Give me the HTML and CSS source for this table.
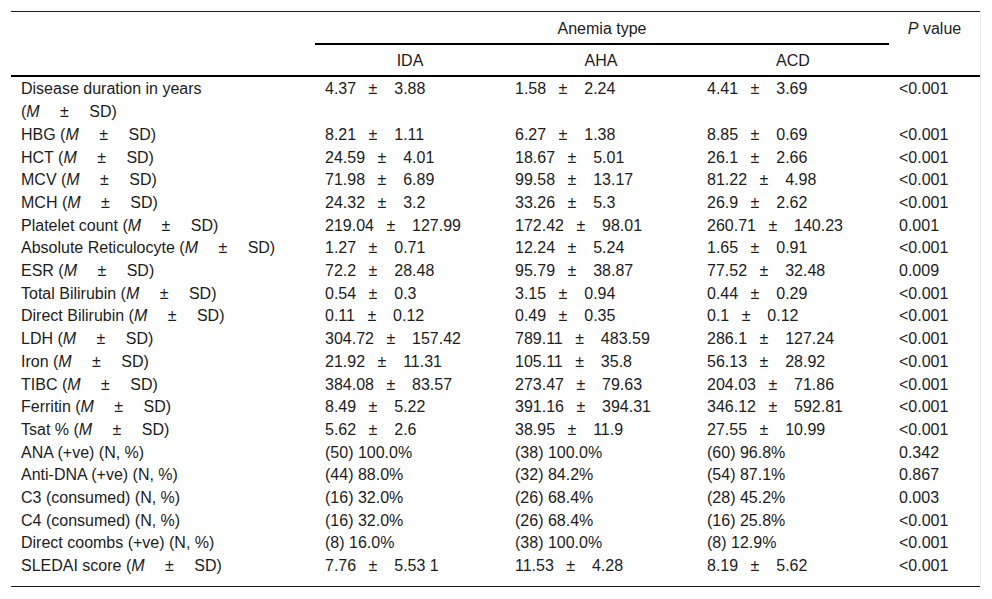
FILE: index.html
```html
<!DOCTYPE html>
<html lang="en">
<head>
<meta charset="utf-8">
<title>Anemia type table</title>
<link rel="stylesheet" href="styles.css">
</head>
<body>
<div class="wrap">
<table class="data">
<colgroup>
<col class="c-label"><col class="c-ida"><col class="c-aha"><col class="c-acd"><col class="c-p">
</colgroup>
<thead>
<tr class="h1">
<th class="blank" rowspan="2"></th>
<th class="group" colspan="3">Anemia type</th>
<th class="pval" rowspan="2"><i>P</i> value</th>
</tr>
<tr class="h2">
<th class="sub">IDA</th>
<th class="sub">AHA</th>
<th class="sub">ACD</th>
</tr>
</thead>
<tbody>
<tr class="first"><td>Disease duration in years<br>(<i>M</i> &emsp;±&emsp; SD)</td><td>4.37&ensp; ±&ensp;&nbsp; 3.88</td><td>1.58&ensp; ±&ensp;&nbsp; 2.24</td><td>4.41&ensp; ±&ensp;&nbsp; 3.69</td><td>&lt;0.001</td></tr>
<tr><td>HBG (<i>M</i> &emsp;±&emsp; SD)</td><td>8.21&ensp; ±&ensp;&nbsp; 1.11</td><td>6.27&ensp; ±&ensp;&nbsp; 1.38</td><td>8.85&ensp; ±&ensp;&nbsp; 0.69</td><td>&lt;0.001</td></tr>
<tr><td>HCT (<i>M</i> &emsp;±&emsp; SD)</td><td>24.59&ensp; ±&ensp;&nbsp; 4.01</td><td>18.67&ensp; ±&ensp;&nbsp; 5.01</td><td>26.1&ensp; ±&ensp;&nbsp; 2.66</td><td>&lt;0.001</td></tr>
<tr><td>MCV (<i>M</i> &emsp;±&emsp; SD)</td><td>71.98&ensp; ±&ensp;&nbsp; 6.89</td><td>99.58&ensp; ±&ensp;&nbsp; 13.17</td><td>81.22&ensp; ±&ensp;&nbsp; 4.98</td><td>&lt;0.001</td></tr>
<tr><td>MCH (<i>M</i> &emsp;±&emsp; SD)</td><td>24.32&ensp; ±&ensp;&nbsp; 3.2</td><td>33.26&ensp; ±&ensp;&nbsp; 5.3</td><td>26.9&ensp; ±&ensp;&nbsp; 2.62</td><td>&lt;0.001</td></tr>
<tr><td>Platelet count (<i>M</i> &emsp;±&emsp; SD)</td><td>219.04&ensp; ±&ensp;&nbsp; 127.99</td><td>172.42&ensp; ±&ensp;&nbsp; 98.01</td><td>260.71&ensp; ±&ensp;&nbsp; 140.23</td><td>0.001</td></tr>
<tr><td>Absolute Reticulocyte (<i>M</i> &emsp;±&emsp; SD)</td><td>1.27&ensp; ±&ensp;&nbsp; 0.71</td><td>12.24&ensp; ±&ensp;&nbsp; 5.24</td><td>1.65&ensp; ±&ensp;&nbsp; 0.91</td><td>&lt;0.001</td></tr>
<tr><td>ESR (<i>M</i> &emsp;±&emsp; SD)</td><td>72.2&ensp; ±&ensp;&nbsp; 28.48</td><td>95.79&ensp; ±&ensp;&nbsp; 38.87</td><td>77.52&ensp; ±&ensp;&nbsp; 32.48</td><td>0.009</td></tr>
<tr><td>Total Bilirubin (<i>M</i> &emsp;±&emsp; SD)</td><td>0.54&ensp; ±&ensp;&nbsp; 0.3</td><td>3.15&ensp; ±&ensp;&nbsp; 0.94</td><td>0.44&ensp; ±&ensp;&nbsp; 0.29</td><td>&lt;0.001</td></tr>
<tr><td>Direct Bilirubin (<i>M</i> &emsp;±&emsp; SD)</td><td>0.11&ensp; ±&ensp;&nbsp; 0.12</td><td>0.49&ensp; ±&ensp;&nbsp; 0.35</td><td>0.1&ensp; ±&ensp;&nbsp; 0.12</td><td>&lt;0.001</td></tr>
<tr><td>LDH (<i>M</i> &emsp;±&emsp; SD)</td><td>304.72&ensp; ±&ensp;&nbsp; 157.42</td><td>789.11&ensp; ±&ensp;&nbsp; 483.59</td><td>286.1&ensp; ±&ensp;&nbsp; 127.24</td><td>&lt;0.001</td></tr>
<tr><td>Iron (<i>M</i> &emsp;±&emsp; SD)</td><td>21.92&ensp; ±&ensp;&nbsp; 11.31</td><td>105.11&ensp; ±&ensp;&nbsp; 35.8</td><td>56.13&ensp; ±&ensp;&nbsp; 28.92</td><td>&lt;0.001</td></tr>
<tr><td>TIBC (<i>M</i> &emsp;±&emsp; SD)</td><td>384.08&ensp; ±&ensp;&nbsp; 83.57</td><td>273.47&ensp; ±&ensp;&nbsp; 79.63</td><td>204.03&ensp; ±&ensp;&nbsp; 71.86</td><td>&lt;0.001</td></tr>
<tr><td>Ferritin (<i>M</i> &emsp;±&emsp; SD)</td><td>8.49&ensp; ±&ensp;&nbsp; 5.22</td><td>391.16&ensp; ±&ensp;&nbsp; 394.31</td><td>346.12&ensp; ±&ensp;&nbsp; 592.81</td><td>&lt;0.001</td></tr>
<tr><td>Tsat % (<i>M</i> &emsp;±&emsp; SD)</td><td>5.62&ensp; ±&ensp;&nbsp; 2.6</td><td>38.95&ensp; ±&ensp;&nbsp; 11.9</td><td>27.55&ensp; ±&ensp;&nbsp; 10.99</td><td>&lt;0.001</td></tr>
<tr><td>ANA (+ve) (N, %)</td><td>(50) 100.0%</td><td>(38) 100.0%</td><td>(60) 96.8%</td><td>0.342</td></tr>
<tr><td>Anti-DNA (+ve) (N, %)</td><td>(44) 88.0%</td><td>(32) 84.2%</td><td>(54) 87.1%</td><td>0.867</td></tr>
<tr><td>C3 (consumed) (N, %)</td><td>(16) 32.0%</td><td>(26) 68.4%</td><td>(28) 45.2%</td><td>0.003</td></tr>
<tr><td>C4 (consumed) (N, %)</td><td>(16) 32.0%</td><td>(26) 68.4%</td><td>(16) 25.8%</td><td>&lt;0.001</td></tr>
<tr><td>Direct coombs (+ve) (N, %)</td><td>(8) 16.0%</td><td>(38) 100.0%</td><td>(8) 12.9%</td><td>&lt;0.001</td></tr>
<tr class="last"><td>SLEDAI score (<i>M</i> &emsp;±&emsp; SD)</td><td>7.76&ensp; ±&ensp;&nbsp; 5.53 1</td><td>11.53&ensp; ±&ensp;&nbsp; 4.28</td><td>8.19&ensp; ±&ensp;&nbsp; 5.62</td><td>&lt;0.001</td></tr>
</tbody>
</table>
</div>
</body>
</html>
```
FILE: styles.css
```css
html, body {
  margin: 0;
  padding: 0;
  background: #ffffff;
}

body {
  font-family: "Liberation Sans", Arial, sans-serif;
  font-size: 16px;
  color: #1c1c1c;
}

.wrap {
  margin: 11px 0 0 11px;
  width: 969px;
  border-right: 1px solid #ebebeb;
}

.data {
  width: 969px;
  table-layout: fixed;
  border-collapse: separate;
  border-spacing: 0;
  border-top: 1px solid #1a1a1a;
  border-bottom: 1px solid #1a1a1a;
}

.c-label { width: 304px; }
.c-ida { width: 190px; }
.c-aha { width: 192px; }
.c-acd { width: 192px; }
.c-p { width: 91px; }

.data th,
.data td {
  padding: 0 10px;
  line-height: 22.7px;
  font-weight: normal;
  vertical-align: top;
  text-align: left;
  white-space: nowrap;
}

.data th {
  text-align: center;
}

.h1 th {
  padding-top: 6px;
  padding-bottom: 2px;
}

.h1 .group,
.h1 .blank,
.h1 .pval {
  border-bottom: 2px solid #000;
}

.h2 .sub {
  padding-top: 5px;
  padding-bottom: 3px;
  border-bottom: 2px solid #000;
}

.data tr.first td {
  padding-top: 1px;
}

.data tr.last td {
  padding-bottom: 8px;
}
```
